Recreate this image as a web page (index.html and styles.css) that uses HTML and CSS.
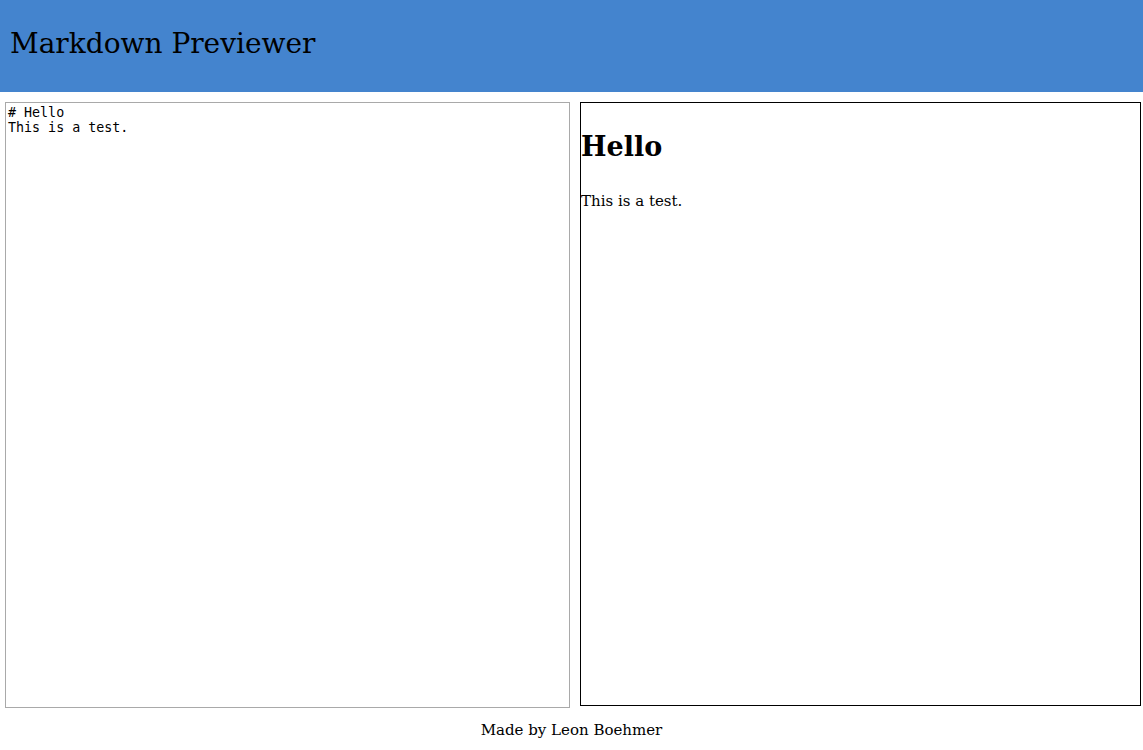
FILE: index.html
```html
<!DOCTYPE html>
<html>
<head>
<meta charset="utf-8">
<title>Markdown Previewer</title>
<link rel="stylesheet" href="styles.css">
</head>
<body>
<header class="header">
  <h1 class="title">Markdown Previewer</h1>
</header>
<main class="panes">
  <textarea class="editor" spellcheck="false"># Hello
This is a test.</textarea>
  <div class="preview">
    <h1 class="preview-h1">Hello</h1>
    <p class="preview-p">This is a test.</p>
  </div>
</main>
<footer class="footer">Made by Leon Boehmer</footer>
</body>
</html>
```
FILE: styles.css
```css
html, body {
  margin: 0;
  padding: 0;
  background: #fff;
}
body {
  font-family: "Roboto Slab", "DejaVu Serif", "Liberation Serif", serif;
  color: #000;
  font-size: 15px;
}
.header {
  background: #4484ce;
  height: 92px;
  display: flex;
  align-items: center;
  padding-left: 10px;
  box-sizing: border-box;
}
.title {
  margin: 0 0 4px;
  font-weight: 400;
  font-size: 28px;
  line-height: 1;
}
.panes {
  display: flex;
  gap: 10px;
  padding: 10px 2px 0 5px;
  align-items: flex-start;
}
.editor {
  box-sizing: border-box;
  width: 565px;
  height: 606px;
  margin: 0;
  padding: 2px;
  border: 1px solid #a9a9a9;
  font-family: "DejaVu Sans Mono", monospace;
  font-size: 13.333px;
  line-height: 15px;
  resize: none;
  outline: none;
  color: #000;
}
.preview {
  box-sizing: border-box;
  width: 561px;
  height: 604px;
  border: 1px solid #000;
  overflow: hidden;
}
.preview-h1 {
  font-size: 27px;
  margin: 26px 0 25px;
  line-height: 36px;
}
.preview-p {
  margin: 0;
  line-height: 22px;
}
.footer {
  text-align: center;
  padding-top: 11px;
  line-height: 22px;
}
```
